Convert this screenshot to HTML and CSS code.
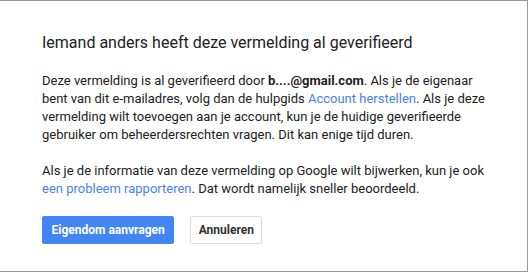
FILE: index.html
```html
<!DOCTYPE html>
<html lang="nl">
<head>
<meta charset="utf-8">
<title>Vermelding al geverifieerd</title>
<link rel="stylesheet" href="styles.css">
</head>
<body>
<div class="dialog">
  <h1 class="title">Iemand anders heeft deze vermelding al geverifieerd</h1>
  <p class="para">Deze vermelding is al geverifieerd door <b>b....@gmail.com</b>. Als je de eigenaar bent van dit e-mailadres, volg dan de hulpgids <a class="link" href="#">Account herstellen</a>. Als je deze vermelding wilt toevoegen aan je account, kun je de huidige geverifieerde gebruiker om beheerdersrechten vragen. Dit kan enige tijd duren.</p>
  <p class="para">Als je de informatie van deze vermelding op Google wilt bijwerken, kun je ook <a class="link" href="#">een probleem rapporteren</a>. Dat wordt namelijk sneller beoordeeld.</p>
  <div class="actions">
    <button class="btn btn-primary">Eigendom aanvragen</button>
    <button class="btn btn-secondary">Annuleren</button>
  </div>
</div>
</body>
</html>
```
FILE: styles.css
```css
html, body {
  margin: 0;
  padding: 0;
  background: #ffffff;
}
body {
  width: 529px;
  height: 273px;
  overflow: hidden;
  font-family: Roboto, "Liberation Sans", Arial, sans-serif;
  color: #212121;
}
.dialog {
  box-sizing: border-box;
  width: 528px;
  height: 272px;
  border-top: 1px solid #9a9a9a;
  border-right: 1px solid #9a9a9a;
  border-bottom: 1px solid #9a9a9a;
  padding: 30px 30px 0 42px;
  background: #fff;
}
.title {
  margin: 0 0 17px;
  font-size: 16px;
  line-height: 24px;
  font-weight: 400;
  color: #212121;
}
.para {
  margin: 0 0 18px;
  font-size: 13px;
  line-height: 18px;
  width: 448px;
}
.para b {
  font-weight: 700;
}
.link {
  color: #4a80f0;
  text-decoration: none;
}
.actions {
  display: flex;
  gap: 16px;
  margin-top: 16px;
}
.btn {
  box-sizing: border-box;
  height: 28px;
  padding: 0 8.5px;
  border-radius: 2px;
  font-family: Roboto, "Liberation Sans", Arial, sans-serif;
  font-size: 12px;
  font-weight: 700;
  cursor: pointer;
}
.btn-primary {
  background: #4285f4;
  border: 1px solid #4285f4;
  color: #fff;
}
.btn-secondary {
  padding: 0 7.5px;
  background: #fff;
  border: 1px solid #dcdcdc;
  color: #333;
}
```
